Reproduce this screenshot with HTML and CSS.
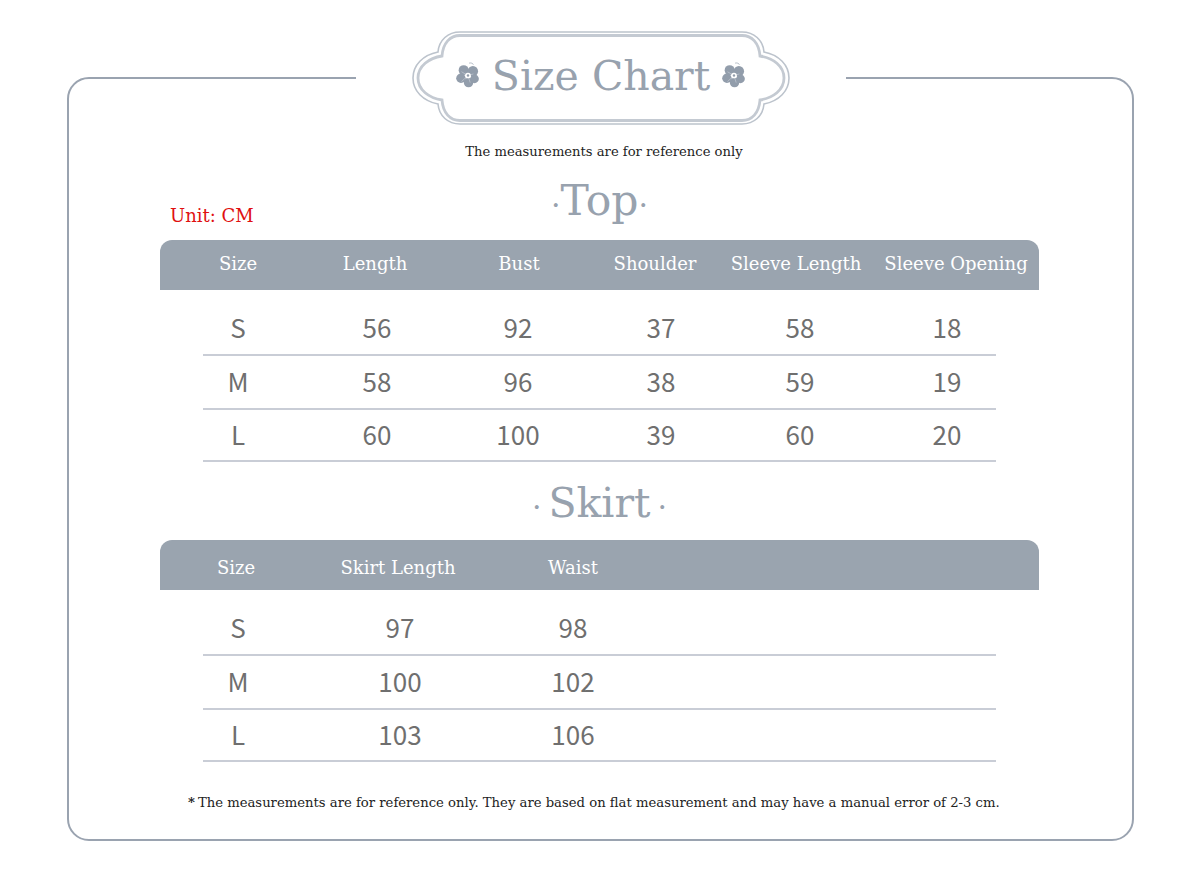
FILE: index.html
```html
<!DOCTYPE html>
<html lang="en">
<head>
<meta charset="utf-8">
<title>Size Chart</title>
<link rel="stylesheet" href="styles.css">
</head>
<body>
<main class="card">
  <header class="badge">
    <svg class="plaque" viewBox="0 0 378 94" aria-hidden="true">
      <path class="plaque-outer" d="M48 1H330C342 1 351 9 352 21C367 24 377 34 377 47C377 60 367 70 352 73C351 85 342 93 330 93H48C36 93 27 85 26 73C11 70 1 60 1 47C1 34 11 24 26 21C27 9 36 1 48 1Z"/>
      <path class="plaque-inner" d="M48 4.5H330C340 4.5 347 12 348 25C361 27 372 35 372 47C372 59 361 67 348 69C347 82 340 89.5 330 89.5H48C38 89.5 31 82 30 69C17 67 6 59 6 47C6 35 17 27 30 25C31 12 38 4.5 48 4.5Z"/>
    </svg>
    <svg class="flower" viewBox="0 0 24 24" aria-hidden="true">
      <use href="#petals"/>
    </svg>
    <h1 class="badge-title">Size Chart</h1>
    <svg class="flower" viewBox="0 0 24 24" aria-hidden="true">
      <g id="petals">
        <path class="stem" d="M13 1C15 .6 16.5 1.2 17 2.5"/>
        <circle class="petal" cx="8" cy="7.5" r="4.6"/>
        <circle class="petal" cx="16.5" cy="8.5" r="4.8"/>
        <circle class="petal" cx="18" cy="15.5" r="4"/>
        <circle class="petal" cx="12.5" cy="19" r="4.4"/>
        <circle class="petal" cx="5.5" cy="15" r="4.4"/>
        <path class="vein" d="M12 12.5L6 9M12 12.5L17 11M12 12.5L14 19M12 12.5L6 18"/>
        <circle class="eye" cx="12" cy="12.5" r="2.6"/>
        <circle class="pupil" cx="12" cy="12.5" r="1.1"/>
      </g>
    </svg>
  </header>

  <p class="intro">The measurements are for reference only</p>

  <div class="title-row title-row-top">
    <p class="unit">Unit: CM</p>
    <h2 class="section-title"><span class="dot">·</span>Top<span class="dot">·</span></h2>
  </div>
  <section class="table table-top">
    <div class="head">
      <span>Size</span><span>Length</span><span>Bust</span><span>Shoulder</span><span>Sleeve Length</span><span>Sleeve Opening</span>
    </div>
    <div class="rows">
      <div class="row"><span>S</span><span>56</span><span>92</span><span>37</span><span>58</span><span class="last">18</span></div>
      <div class="row"><span>M</span><span>58</span><span>96</span><span>38</span><span>59</span><span class="last">19</span></div>
      <div class="row row-end"><span>L</span><span>60</span><span>100</span><span>39</span><span>60</span><span class="last">20</span></div>
    </div>
  </section>

  <div class="title-row title-row-skirt">
    <span></span>
    <h2 class="section-title section-title-skirt"><span class="dot dot-wide">·</span>Skirt<span class="dot dot-wide">·</span></h2>
  </div>
  <section class="table table-skirt">
    <div class="head">
      <span>Size</span><span>Skirt Length</span><span>Waist</span>
    </div>
    <div class="rows">
      <div class="row"><span>S</span><span>97</span><span>98</span></div>
      <div class="row"><span>M</span><span>100</span><span>102</span></div>
      <div class="row row-end"><span>L</span><span>103</span><span>106</span></div>
    </div>
  </section>

  <p class="note"><span class="star">*</span>The measurements are for reference only. They are based on flat measurement and may have a manual error of 2-3 cm.</p>
</main>
</body>
</html>
```
FILE: styles.css
```css
* { box-sizing: border-box; }
html, body { margin: 0; padding: 0; background: #fff; }
body {
  width: 1200px;
  height: 876px;
  overflow: hidden;
  font-family: "DejaVu Serif", serif;
}
.card {
  position: relative;
  width: 1067px;
  height: 764px;
  margin: 77px 0 0 67px;
  padding-top: 63px;
  border: 2px solid #9aa3b0;
  border-radius: 22px;
}
.badge {
  position: absolute;
  top: -48px;
  left: 287px;
  width: 490px;
  height: 98px;
  padding-bottom: 8px;
  background: #fff;
  display: flex;
  align-items: center;
  justify-content: center;
  gap: 11px;
}
.plaque {
  position: absolute;
  left: 56px;
  top: 0;
  width: 378px;
  height: 94px;
}
.plaque-outer { fill: #fff; stroke: #bcc3cc; stroke-width: 1.6; }
.plaque-inner { fill: #fff; stroke: #c4cad2; stroke-width: 2.8; }
.flower { position: relative; width: 26px; height: 26px; flex: none; margin-bottom: 2px; }
.petal { fill: #929dab; }
.vein { fill: none; stroke: #c5cbd3; stroke-width: .6; }
.eye { fill: #fff; }
.pupil { fill: #929dab; }
.stem { fill: none; stroke: #929dab; stroke-width: .6; }
.badge-title {
  position: relative;
  margin: 0;
  font-size: 41px;
  font-weight: 400;
  line-height: 50px;
  color: #98a2ae;
  white-space: nowrap;
}
.intro {
  margin: 0;
  padding-left: 7px;
  height: 20px;
  font-size: 13.15px;
  line-height: 20px;
  text-align: center;
  color: #222;
}
.title-row {
  display: grid;
  grid-template-columns: 1fr auto 1fr;
  align-items: center;
  height: 78px;
}
.title-row-top { padding-top: 4px; }
.title-row-skirt { padding-top: 8px; }
.unit {
  margin: 0;
  padding: 26px 0 0 101px;
  font-size: 18px;
  line-height: 24px;
  color: #e01010;
}
.section-title {
  margin: 0;
  padding-right: 2px;
  font-size: 42.5px;
  font-weight: 400;
  line-height: 50px;
  color: #98a2ae;
}
.section-title-skirt { font-size: 41px; }
.dot { font-size: 30px; }
.dot-wide { margin: 0 7px; }
.table {
  width: 879px;
  margin-left: 91px;
}
.head {
  display: grid;
  height: 50px;
  align-items: center;
  justify-items: center;
  background: #9aa4af;
  border-radius: 12px 12px 0 0;
  font-size: 18px;
  color: #fff;
  text-align: center;
  white-space: nowrap;
}
.table-top .head { grid-template-columns: 156px 118px 170px 102px 180px 140px; padding-bottom: 3px; }
.table-skirt .head { grid-template-columns: 152px 172px 178px; padding-top: 4px; }
.rows {
  margin: 0 43px;
  padding-top: 12px;
  font-family: "Noto Sans CJK SC", "Noto Sans", sans-serif;
  font-size: 26px;
  font-weight: 400;
  color: #6f6f6f;
  text-align: center;
}
.row {
  display: grid;
  align-items: center;
  height: 54px;
  padding-bottom: 3px;
  border-bottom: 2px solid #c9cdd6;
}
.row-end { height: 52px; }
.table-top .row { grid-template-columns: 70px 208px 74px 212px 66px 163px; }
.table-skirt .row { grid-template-columns: 70px 254px 92px; }
.last { padding-left: 65px; }
.note {
  margin: 31px 0 0;
  padding-left: 119px;
  height: 20px;
  font-size: 13.2px;
  line-height: 20px;
  color: #222;
  white-space: nowrap;
}
.star { margin-right: 3px; font-weight: 700; }
```
